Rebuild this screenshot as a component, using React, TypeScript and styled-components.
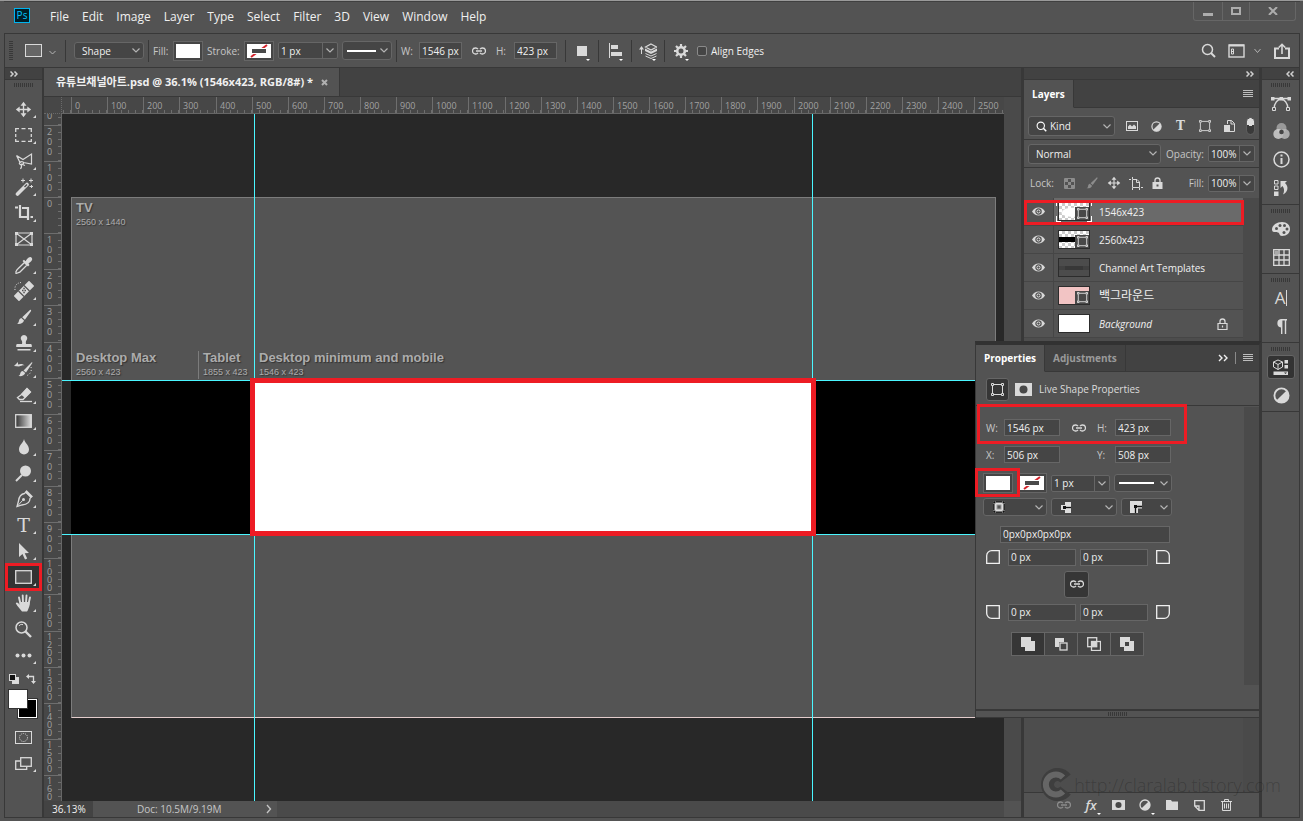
import React from "react";
import styled, { createGlobalStyle, css } from "styled-components";

const c = {
  panel: "#535353",
  strip: "#424242",
  line: "#383838",
  field: "#454545",
  edge: "#666666",
  trough: "#4a4a4a",
  canvas: "#282828",
  text: "#f0f0f0",
  label: "#c6c6c6",
  icon: "#d9d9d9",
  guide: "#4af6ff",
  mark: "#ed1c24",
};

const GlobalStyle = createGlobalStyle`
  * { box-sizing: border-box; }
  body {
    margin: 0;
    background: ${c.panel};
    color: ${c.text};
    font-family: "Open Sans", "Noto Sans CJK KR", sans-serif;
    font-size: 10px;
    line-height: 14px;
  }
  button, input, select { font: inherit; color: inherit; margin: 0; }
  svg { display: block; flex: none; }
`;

/* ---------- shared parts ---------- */

const Shell = styled.div`
  display: flex;
  flex-direction: column;
  height: 100vh;
  overflow: hidden;
  padding: 0 3px 3px 4px;
  background: ${c.panel};
  border-top: 1px solid #9a9a9a;
`;

const Frame = styled.div`
  flex: 1;
  min-height: 0;
  display: flex;
  flex-direction: column;
  border: 1px solid ${c.line};
`;

const Body = styled.div`
  position: relative;
  flex: 1;
  min-height: 0;
  display: flex;
`;

const Svg = ({ w = 16, h = w, box, children }: { w?: number; h?: number; box?: string; children: React.ReactNode }) => (
  <svg width={w} height={h} viewBox={box ?? `0 0 ${w} ${h}`} fill="none" stroke="currentColor" aria-hidden="true">
    {children}
  </svg>
);

const IconButton = styled.button<{ $w?: number; $h?: number; $dim?: boolean }>`
  position: relative;
  display: flex;
  align-items: center;
  justify-content: center;
  flex: none;
  width: ${(p) => p.$w ?? 16}px;
  height: ${(p) => p.$h ?? 20}px;
  padding: 0;
  border: 0;
  background: none;
  color: ${(p) => (p.$dim ? "#8c8c8c" : c.icon)};
`;

const Grip = styled.div<{ $vertical?: boolean }>`
  flex: none;
  ${(p) =>
    p.$vertical
      ? css`width: 4px; height: 20px; background: repeating-linear-gradient(${c.line} 0 1px, transparent 1px 2px);`
      : css`width: 20px; height: 4px; background: repeating-linear-gradient(90deg, ${c.line} 0 1px, transparent 1px 2px);`}
`;

const FieldLabel = styled.label<{ $w?: number }>`
  flex: none;
  width: ${(p) => (p.$w ? `${p.$w}px` : "auto")};
  color: ${c.label};
  white-space: nowrap;
`;

const TextField = styled.input<{ $w: number }>`
  flex: none;
  width: ${(p) => p.$w}px;
  height: 17px;
  padding: 0 2px;
  border: 1px solid ${c.edge};
  background: ${c.field};
  color: ${c.text};
`;

const ComboShell = styled.div<{ $w: number }>`
  flex: none;
  display: flex;
  width: ${(p) => p.$w}px;
  height: 17px;
  border: 1px solid ${c.edge};
  border-radius: 2px;
  background: ${c.field};
  input {
    flex: 1;
    min-width: 0;
    padding: 0 2px;
    border: 0;
    background: none;
  }
  button {
    width: 15px;
    padding: 0;
    border: 0;
    border-left: 1px solid ${c.edge};
    background: none;
    display: flex;
    align-items: center;
    justify-content: center;
    color: #b4b4b4;
  }
`;

const SelectShell = styled.div<{ $w: number; $h: number }>`
  position: relative;
  flex: none;
  display: flex;
  align-items: center;
  width: ${(p) => p.$w}px;
  height: ${(p) => p.$h}px;
  border: 1px solid ${c.edge};
  border-radius: 3px;
  background: ${c.field};
  color: #b4b4b4;
  > svg, > span { pointer-events: none; position: absolute; }
  > svg:last-child { right: 3px; }
`;

const NativeSelect = styled.select<{ $pad: number; $hide?: boolean }>`
  appearance: none;
  width: 100%;
  height: 100%;
  padding: 0 14px 0 ${(p) => p.$pad}px;
  border: 0;
  background: none;
  color: ${(p) => (p.$hide ? "transparent" : c.text)};
`;

const SelectArt = styled.span<{ $left: number }>`
  left: ${(p) => p.$left}px;
  color: #fff;
`;

const Mark = styled.div<{ $t: number; $l: number; $w: number; $h: number }>`
  position: absolute;
  z-index: 3;
  top: ${(p) => p.$t}px;
  left: ${(p) => p.$l}px;
  width: ${(p) => p.$w}px;
  height: ${(p) => p.$h}px;
  border: 3px solid ${c.mark};
  pointer-events: none;
`;

const Chevron = () => (
  <Svg w={8} h={5}>
    <path d="M.5.5 4 4 7.5.5" strokeWidth="1.2" />
  </Svg>
);

const Combo = ({ id, w, value, label }: { id: string; w: number; value: string; label: string }) => (
  <ComboShell $w={w}>
    <input id={id} defaultValue={value} aria-label={label} />
    <button aria-label={`${label} options`}><Chevron /></button>
  </ComboShell>
);

const Select = ({ w, h, pad = 8, label, value, art, artLeft = 4 }: {
  w: number; h: number; pad?: number; label: string; value: string; art?: React.ReactNode; artLeft?: number;
}) => (
  <SelectShell $w={w} $h={h}>
    <NativeSelect $pad={pad} $hide={!!art && pad === 8} aria-label={label}>
      <option>{value}</option>
    </NativeSelect>
    {art && <SelectArt $left={artLeft}>{art}</SelectArt>}
    <Chevron />
  </SelectShell>
);

/* ---------- icons ---------- */

const f = { fill: "currentColor", stroke: "none" };

const LinkIcon = () => (
  <Svg w={14} h={8}>
    <path d="M6 2.2A2.8 2.8 0 0 0 3.8 1H3.5a3 3 0 0 0 0 6h.3A2.8 2.8 0 0 0 6 5.8M8 2.2A2.8 2.8 0 0 1 10.2 1h.3a3 3 0 0 1 0 6h-.3A2.8 2.8 0 0 1 8 5.800M4 4h6" strokeWidth="1.3" />
  </Svg>
);
const TransformIcon = ({ s = 13 }: { s?: number }) => (
  <Svg w={s} box="0 0 13 13">
    <path d="M3 1.500h7M3 11.500h7M1.500 3v7M11.500 3v7M.5.5h2v2h-2zM10.500.5h2v2h-2zM.5 10.500h2v2h-2zM10.500 10.500h2v2h-2z" />
  </Svg>
);
const HalfIcon = ({ s = 12 }: { s?: number }) => (
  <Svg w={s} box="0 0 12 12">
    <circle cx="6" cy="6" r="5" strokeWidth="1.300" />
    <path d="M9.600 2.400A5 5 0 0 1 2.400 9.600z" {...f} />
  </Svg>
);
const MaskIcon = ({ w = 13, h = 10 }: { w?: number; h?: number }) => (
  <Svg w={w} h={h} box="0 0 17 13">
    <rect width="17" height="13" {...f} />
    <circle cx="8.500" cy="6.500" r="4" fill="#484848" stroke="none" />
  </Svg>
);
const MenuLines = () => (
  <Svg w={10} h={8}><path d="M0 .5h10M0 2.500h10M0 4.500h10M0 6.500h10" stroke="#bdbdbd" /></Svg>
);
const MoveIcon = ({ s = 20 }: { s?: number }) => (
  <Svg w={s} box="0 0 20 20">
    <path d="M10 4v12M4 10h12" strokeWidth="1.600" />
    <path d="M10 1 13.500 5.500h-7zM10 19l3.500-4.500h-7zM1 10l4.500-3.500v7zM19 10l-4.500-3.500v7z" {...f} />
  </Svg>
);
const BrushIcon = ({ s = 20 }: { s?: number }) => (
  <Svg w={s} box="0 0 20 20">
    <path d="M17.500 2c.8.500.4 1.300 0 2l-6.500 9-3-2.600 8-7.700c.500-.5 1-.9 1.500-.7zM7 11.200l3 2.600c-.8 3-4 4.400-8 3.700 2-.7 2-1.500 2.400-3.300.3-1.500 1.200-2.600 2.600-3z" {...f} />
  </Svg>
);
const SearchIcon = ({ s = 15 }: { s?: number }) => (
  <Svg w={s} box="0 0 15 15">
    <circle cx="6.500" cy="6.500" r="5" strokeWidth="1.500" />
    <path d="m10 10 4 4" strokeWidth="2" />
  </Svg>
);
const DoubleArrow = ({ left }: { left?: boolean }) => (
  <Svg w={8} h={6}>
    <path d={left ? "M3.500.5 1 3l2.500 2.500M7.500.5 5 3l2.500 2.500" : "M.5.5 3 3 .5 5.500M4.500.5 7 3 4.500 5.500"} stroke="#d0d0d0" strokeWidth="1.500" />
  </Svg>
);
const LockIcon = ({ open }: { open?: boolean }) => (
  <Svg w={11} h={12}>
    <path d="M3 6V3.500a2.500 2.500 0 0 1 5 0V6" strokeWidth="1.300" />
    {open ? <path d="M1 5.500h9v6H1zM5.500 7.500v2" strokeWidth="1.200" /> : (
      <><rect x=".5" y="5" width="10" height="7" {...f} /><rect x="4.500" y="7.500" width="2" height="2" fill="#535353" stroke="none" /></>
    )}
  </Svg>
);

const Slab = styled.span<{ $size: number; $bold?: boolean }>`
  font: ${(p) => (p.$bold ? "bold" : "normal")} ${(p) => p.$size}px/1 "DejaVu Serif", serif;
`;

/* ---------- title bar ---------- */

const TitleBar = styled.header`
  flex: none;
  display: flex;
  height: 32px;
  padding-left: 10px;
  border-top: 1px solid #404040;
`;

const AppLogo = styled.span`
  width: 16px;
  height: 15px;
  margin: 6px 20px 0 0;
  border: 1px solid #00b4f0;
  background: #001d26;
  color: #00c2ff;
  font-size: 10px;
  line-height: 13px;
  text-align: center;
`;

const MenuList = styled.nav`
  display: flex;
  gap: 13px;
  padding-top: 6px;
  font-size: 12px;
  line-height: 18px;
  a { color: ${c.text}; text-decoration: none; }
`;

const WindowButtons = styled.div`
  display: flex;
  height: 19px;
  margin: 0 4px 0 auto;
  border: 1px solid ${c.edge};
  border-top: 0;
  border-radius: 0 0 3px 3px;
  color: #adadad;
  button { height: 18px; color: inherit; }
  button + button { border-left: 1px solid ${c.edge}; }
`;

const menus = ["File", "Edit", "Image", "Layer", "Type", "Select", "Filter", "3D", "View", "Window", "Help"];

const Title = () => (
  <TitleBar>
    <AppLogo>Ps</AppLogo>
    <MenuList aria-label="Main menu">
      {menus.map((m) => <a href="#menu" key={m}>{m}</a>)}
    </MenuList>
    <WindowButtons>
      <IconButton $w={28} aria-label="Minimize"><Svg w={10} h={12}><path d="M0 9.500h10" strokeWidth="3" /></Svg></IconButton>
      <IconButton $w={27} aria-label="Restore"><Svg w={10} h={8}><rect x="1" y="1" width="8" height="6" strokeWidth="2" /></Svg></IconButton>
      <IconButton $w={46} aria-label="Close"><Svg w={10} h={8}><path d="m1 0 8 8M9 0 1 8" strokeWidth="2" /></Svg></IconButton>
    </WindowButtons>
  </TitleBar>
);

/* ---------- options bar ---------- */

const OptionsBar = styled.div`
  flex: none;
  display: flex;
  align-items: center;
  gap: 4px;
  height: 34px;
  padding-left: 4px;
  border-bottom: 1px solid ${c.line};
`;

const Divider = styled.span<{ $wide?: boolean; $end?: boolean }>`
  width: 1px;
  height: 22px;
  margin: 0 ${(p) => (p.$wide || p.$end ? 4 : 0)}px 0 ${(p) => (p.$wide ? 4 : 0)}px;
  background: ${c.line};
`;

const SwatchButton = styled.button`
  flex: none;
  display: flex;
  align-items: center;
  justify-content: center;
  width: 30px;
  height: 20px;
  padding: 0;
  border: 1px solid ${c.edge};
  background: ${c.field};
`;

const FillArt = () => <Svg w={24} h={14}><rect width="24" height="14" fill="#fff" stroke="none" /></Svg>;
const NoStrokeArt = () => (
  <Svg w={24} h={14}>
    <rect width="24" height="14" fill="#fff" stroke="none" />
    <path d="m4 13 16-12" stroke="#d4232b" strokeWidth="2" />
    <rect x="3" y="4" width="18" height="6" fill="#fff" stroke="none" />
    <rect x="5" y="5" width="14" height="4" fill="#4a4a4a" stroke="none" />
  </Svg>
);

const MiniArrow = styled.i`
  position: absolute;
  right: 0;
  bottom: 0;
  border: 2px solid transparent;
  border-top-color: #fff;
  border-bottom: 0;
`;

const CheckLabel = styled.label`
  display: flex;
  align-items: center;
  gap: 4px;
  margin-left: 4px;
  input {
    appearance: none;
    width: 10px;
    height: 10px;
    border: 1px solid #8a8a8a;
    border-radius: 2px;
    background: ${c.field};
  }
`;

const RightTools = styled.div`
  display: flex;
  align-items: center;
  gap: 10px;
  margin-left: auto;
  padding-right: 7px;
`;

const Options = () => (
  <OptionsBar>
    <Grip $vertical />
    <IconButton $w={44} aria-label="Tool preset">
      <Svg w={34} h={14}>
        <rect x="3.500" y=".5" width="16" height="12" fill="#666" />
        <path d="m27.500 7 3 3 3-3" stroke="#b4b4b4" />
      </Svg>
    </IconButton>
    <Divider $end />
    <Select w={70} h={17} pad={7} label="Tool mode" value="Shape" />
    <Divider />
    <FieldLabel $w={16}>Fill:</FieldLabel>
    <SwatchButton aria-label="Fill colour"><FillArt /></SwatchButton>
    <FieldLabel $w={33} htmlFor="stroke-size">Stroke:</FieldLabel>
    <SwatchButton aria-label="Stroke colour"><NoStrokeArt /></SwatchButton>
    <Combo id="stroke-size" w={60} value="1 px" label="Stroke width" />
    <Select w={50} h={19} label="Stroke type" value="Solid" art={<Svg w={29} h={2}><path d="M0 1h29" strokeWidth="2" /></Svg>} />
    <Divider />
    <FieldLabel $w={14} htmlFor="opt-w">W:</FieldLabel>
    <TextField $w={43} id="opt-w" defaultValue="1546 px" />
    <IconButton $w={26} aria-label="Link width and height"><LinkIcon /></IconButton>
    <FieldLabel $w={14} htmlFor="opt-h">H:</FieldLabel>
    <TextField $w={43} id="opt-h" defaultValue="423 px" />
    <Divider $wide />
    <IconButton aria-label="Path operations">
      <Svg w={10} h={10}><rect width="10" height="10" {...f} /></Svg><MiniArrow />
    </IconButton>
    <Divider $wide />
    <IconButton aria-label="Path alignment">
      <Svg w={13} h={15}><path d="M.5 0v15" /><path d="M2 2h7v4H2zM2 9h11v4H2z" {...f} /></Svg><MiniArrow />
    </IconButton>
    <Divider $wide />
    <IconButton aria-label="Path arrangement">
      <Svg w={18} h={16}>
        <path d="M2.500 11V5.500" />
        <path d="M2.500 3 5 6.500H0z" {...f} />
        <path d="m12 1 5.500 3L12 7 6.500 4z" strokeWidth="1.200" />
        <path d="M6 5.500 12 8.500l6-3v2.500l-6 3-6-3z" {...f} />
        <path d="m6.500 10.500 5.500 2.500 5.500-2.500M6.500 13l5.500 2.500 5.500-2.500" />
      </Svg><MiniArrow />
    </IconButton>
    <Divider $wide />
    <IconButton aria-label="Path options">
      <Svg w={14}>
        <circle cx="7" cy="7" r="3.800" strokeWidth="2.600" />
        <path d="M7 0v3M7 11v3M0 7h3M11 7h3M2 2l2 2M10 10l2 2M12 2l-2 2M4 10l-2 2" strokeWidth="2.200" />
      </Svg><MiniArrow />
    </IconButton>
    <CheckLabel><input type="checkbox" />Align Edges</CheckLabel>
    <RightTools>
      <IconButton aria-label="Search"><SearchIcon /></IconButton>
      <IconButton $w={36} aria-label="Workspace">
        <Svg w={34} h={14}>
          <rect x="2" y="1" width="15" height="12" strokeWidth="1.400" />
          <path d="M2 1.500h15" strokeWidth="2" />
          <path d="M4.500 5h2v5h-2zM4.500 7.500h2" />
          <path d="m27.500 5 3 3.500 3-3.500" stroke="#b4b4b4" />
        </Svg>
      </IconButton>
      <IconButton $w={20} aria-label="Share">
        <Svg w={16}><path d="M5 5.500H1V15h14V5.500h-4" strokeWidth="2" /><path d="M8 11V2M4.800 4.500 8 1.300l3.200 3.200" strokeWidth="1.600" /></Svg>
      </IconButton>
    </RightTools>
  </OptionsBar>
);

/* ---------- toolbar ---------- */

const Toolbar = styled.aside`
  flex: none;
  display: flex;
  flex-direction: column;
  align-items: center;
  width: 39px;
  border-right: 2px solid ${c.line};
`;

const Strip = styled.div<{ $end?: boolean }>`
  flex: none;
  align-self: stretch;
  display: flex;
  align-items: center;
  justify-content: ${(p) => (p.$end ? "flex-end" : "flex-start")};
  height: 12px;
  padding: 0 5px;
  border-bottom: 1px solid ${c.line};
  background: ${c.strip};
`;

const ToolGrip = styled(Grip)`
  margin: 3px 0 9px;
`;

const ToolButton = styled(IconButton)<{ $flyout?: boolean; $active?: boolean }>`
  width: 32px;
  height: 26px;
  background: ${(p) => (p.$active ? "#333" : "none")};
  &::after {
    content: "";
    display: ${(p) => (p.$flyout ? "block" : "none")};
    position: absolute;
    right: 4px;
    bottom: 4px;
    border: 1px solid ${c.icon};
    border-width: 0 0 3px 3px;
    border-left-color: transparent;
  }
`;

const tools: { name: string; flyout?: boolean; active?: boolean; art: React.ReactNode }[] = [
  { name: "Move", flyout: true, art: <MoveIcon s={17} /> },
  { name: "Rectangular marquee", flyout: true, art: <Svg w={17} h={14}><path d="M.7 4V.7H4M6.500.7h4M13 .7h3.300V4M16.300 6v3M16.300 11v2.300H13M10.500 13.300h-4M4 13.300H.7V11M.7 9V6" strokeWidth="1.300" /></Svg> },
  { name: "Polygonal lasso", flyout: true, art: <Svg w={18}><path d="m1.500 3.500 6.500 4 8.500-5.500v10l-8-1.500M1.500 3.500 5 10.500c2-2 5 0 3 1.500s-5-.5-3-1.500M6 12l4 1.500M6 12.500c1 1.500.5 3-.5 4.500" strokeWidth="1.200" /></Svg> },
  { name: "Magic wand", flyout: true, art: <Svg w={18}><path d="M2.500 16 12 6.500" strokeWidth="3.600" strokeLinecap="round" /><path d="m9.500 9 2.500-2.500" stroke="#535353" strokeWidth="1.500" /><path d="M6 2.500h4M8 .5v4M14 2.500h4M16 .5v4M14.500 8.500H18M16.500 7v3" /></Svg> },
  { name: "Crop", flyout: true, art: <Svg w={18}><path d="M0 3.500h3M5 1v12h9M7 4h6v12M15.500 13H18" strokeWidth="2.200" /></Svg> },
  { name: "Frame", art: <Svg w={18} h={14}><path d="M1 1h16v12H1zM1 1l16 12M17 1 1 13" strokeWidth="1.200" /><path d="M0 0h3v3H0zM15 0h3v3h-3zM0 11h3v3H0zM15 11h3v3h-3z" {...f} /></Svg> },
  { name: "Eyedropper", flyout: true, art: <Svg w={18}><path d="m9.500 6.500 2.500 2.500-7 7c-1 1-2 .5-2.500 1l-1.500.5v-2c.5-.5.5-1.500 1.500-2.300z" strokeWidth="1.300" /><path d="M7.500 5 9 3.800l1.500 1.400C12 3.500 13 .8 15.500 1c1.500.2 2 2 1.500 3-.5 1.500-2.500 2.500-3.500 3.500l1 1.500-1.500 1.500z" {...f} /></Svg> },
  { name: "Healing brush", flyout: true, art: <Svg w={20}><path d="M5 15 15 5" strokeWidth="7.500" strokeLinecap="square" /><path d="m4.500 10 5.500 5.500M10 4.500l5.500 5.500" stroke="#535353" strokeWidth="1.200" /><path d="M8 9.500h1.500M10.500 9.500H12M9.300 7.500h1.500M9.300 11.500h1.500" stroke="#535353" strokeWidth="1.500" /><path d="M1 9c-.5-4 1.500-7 6-7.500" strokeDasharray="1 1.500" /></Svg> },
  { name: "Brush", flyout: true, art: <BrushIcon s={18} /> },
  { name: "Clone stamp", flyout: true, art: <Svg w={16}><path d="M8 0a3.200 3.200 0 0 1 2.500 5.200C9.700 6.200 9.700 8 10 9h4.500c.8 0 1.300.6 1.300 1.300V12H.2v-1.700C.2 9.600.7 9 1.500 9H6c.3-1 .3-2.800-.5-3.800A3.200 3.200 0 0 1 8 0zM1.500 14h13v1.500h-13z" {...f} /></Svg> },
  { name: "History brush", flyout: true, art: <Svg w={20}><path d="M18 3c.6.500.3 1 0 1.500l-6 9-2.500-2zM8.800 12l2.400 2c-.7 2.500-3.500 3.500-6.700 3 1.800-1 1.500-2.300 2-3.300s1-1.600 2.300-1.700zM0 7l4-4v2.500c3-1 5-.5 7 1C9 6 7 7 5 7.500z" {...f} /><path d="M17 8c1 4-.5 7-4 8.500" strokeDasharray="1 2" /></Svg> },
  { name: "Eraser", flyout: true, art: <Svg w={18} h={16}><path d="m6 8 6-6.500L15.500 5 8 12.500H4.500L2.500 10.500z" strokeWidth="1.300" /><path d="m6 7.500 6-6.500 4 4-6 6z" {...f} /><path d="M5 14.500h12" strokeWidth="1.300" /></Svg> },
  { name: "Gradient", flyout: true, art: <Svg w={17} h={14}><defs><linearGradient id="tool-gradient"><stop stopColor="#333" /><stop offset="1" stopColor="#ddd" /></linearGradient></defs><rect x=".7" y=".7" width="15.600" height="12.600" fill="url(#tool-gradient)" strokeWidth="1.300" /></Svg> },
  { name: "Blur", flyout: true, art: <Svg w={12} h={16}><path d="M6 0c.8 4 5 6 5 10.500a5 5 0 0 1-10 0C1 6 5.200 4 6 0z" {...f} /></Svg> },
  { name: "Dodge", flyout: true, art: <Svg w={17}><circle cx="10.500" cy="6" r="5.500" {...f} /><path d="M7 10 1 16" strokeWidth="2" /></Svg> },
  { name: "Pen", flyout: true, art: <Svg w={18}><path d="m11 2 5 5-1 1.500c0 4-3.500 6-8 6.500L2 16.500 3.500 11C4 7 6 4 9.500 3.500z" strokeWidth="1.300" /><path d="m2.500 16 5-5.500" /><circle cx="8.500" cy="9.500" r="1.500" {...f} /><path d="m11.500 0 6.500 6.500-2 1.500-6-5.500z" {...f} /></Svg> },
  { name: "Type", flyout: true, art: <Slab $size={19}>T</Slab> },
  { name: "Path selection", flyout: true, art: <Svg w={12} h={17}><path d="M1 0v14l3.500-3L7 16.500l2.200-1L6.700 10.300 11 10z" {...f} /></Svg> },
  { name: "Rectangle", flyout: true, active: true, art: <Svg w={17} h={14}><rect x=".7" y=".7" width="15.600" height="12.600" fill="#555" strokeWidth="1.300" /></Svg> },
  { name: "Hand", flyout: true, art: <Svg w={18}><path d="M5.500 10 4 3.500M8 9 7.700 1.500M11 9l.5-7.500M13.500 10l1.500-6.500" strokeWidth="1.900" strokeLinecap="round" /><path d="M4.500 8h10.200c.5 4-1.200 6-2 8.500L12 17.500H7L2.500 12 .8 9.500c.4-1.300 1.700-1 2.500-.2l1.500 1.400z" {...f} /></Svg> },
  { name: "Zoom", art: <Svg w={17}><circle cx="6.500" cy="6.500" r="5.500" strokeWidth="1.500" /><path d="M4 5c.8-1.500 2.500-2 4-1.300" /><path d="m10.500 10.500 5.500 5.500" strokeWidth="2.400" /></Svg> },
  { name: "Edit toolbar", flyout: true, art: <Svg w={17} h={5}><circle cx="2.500" cy="2.500" r="2" {...f} /><circle cx="8.500" cy="2.500" r="2" {...f} /><circle cx="14.500" cy="2.500" r="2" {...f} /></Svg> },
];

const MiniRow = styled.div`
  align-self: stretch;
  display: flex;
  justify-content: space-between;
  padding: 4px 6px 0 4px;
`;

const ColourPair = styled.div`
  display: grid;
  grid-template: 10px 10px 9px / 10px 10px 9px;
  margin: 3px 2px 6px 0;
`;

const ColourWell = styled.button<{ $back?: boolean }>`
  padding: 0;
  grid-area: ${(p) => (p.$back ? "2 / 2 / 4 / 4" : "1 / 1 / 3 / 3")};
  border: 1px solid ${(p) => (p.$back ? "#fff" : "#333")};
  outline: ${(p) => (p.$back ? 1 : 0)}px solid #333;
  background: ${(p) => (p.$back ? "#000" : "#fff")};
  z-index: ${(p) => (p.$back ? 0 : 1)};
`;

const ToolPanel = () => (
  <Toolbar aria-label="Tools">
    <Strip><DoubleArrow /></Strip>
    <ToolGrip />
    {tools.map((t) => (
      <ToolButton key={t.name} aria-label={t.name} $flyout={t.flyout} $active={t.active}>
        {t.art}
        {t.active && <Mark $t={-1} $l={-3} $w={37} $h={28} />}
      </ToolButton>
    ))}
    <MiniRow>
      <IconButton $w={10} $h={14} aria-label="Default colours">
        <Svg w={10}><rect x="3.500" y="3.500" width="6" height="6" fill="#ddd" /><rect x=".5" y=".5" width="6" height="6" fill="#111" /></Svg>
      </IconButton>
      <IconButton $w={10} $h={14} aria-label="Swap colours">
        <Svg w={10}><path d="M2 2.500h5.500V8" strokeWidth="1.300" /><path d="M3 0v5L0 2.500zM5 7h5l-2.500 3z" {...f} /></Svg>
      </IconButton>
    </MiniRow>
    <ColourPair>
      <ColourWell aria-label="Foreground colour" />
      <ColourWell $back aria-label="Background colour" />
    </ColourPair>
    <ToolButton aria-label="Quick mask">
      <Svg w={17} h={13}><rect x=".5" y=".5" width="16" height="12" /><circle cx="8.500" cy="6.500" r="4" strokeDasharray="1 1" /></Svg>
    </ToolButton>
    <ToolButton aria-label="Screen mode" $flyout>
      <Svg w={17} h={13}><path d="M5 4H.7v8.300h11V10" strokeWidth="1.300" /><rect x="5.700" y=".7" width="10.600" height="8.600" strokeWidth="1.300" /></Svg>
    </ToolButton>
  </Toolbar>
);

/* ---------- document ---------- */

const Document = styled.main`
  flex: 1;
  min-width: 0;
  display: flex;
  flex-direction: column;
`;

const TabBar = styled.div`
  flex: none;
  display: flex;
  height: 29px;
  border-bottom: 1px solid ${c.line};
  background: ${c.strip};
`;

const DocTab = styled.div`
  display: flex;
  align-items: center;
  gap: 8px;
  padding: 0 10px 0 12px;
  border-right: 1px solid ${c.line};
  background: ${c.panel};
  font-weight: 700;
  font-size: 11px;
  white-space: nowrap;
`;

const Workspace = styled.div`
  flex: 1;
  min-height: 0;
  display: grid;
  grid-template: 17px minmax(0, 1fr) / 18px minmax(0, 1fr) 17px;
`;

const RulerCorner = styled.div`
  border-right: 1px dotted #6a6a6a;
  border-bottom: 1px dotted #6a6a6a;
  background: #474747;
`;

const Ruler = styled.div<{ $vertical?: boolean }>`
  display: flex;
  flex-direction: ${(p) => (p.$vertical ? "column" : "row")};
  overflow: hidden;
  background: #474747;
  color: #a2a2a2;
  font-size: 9px;
  border: 0 solid #666;
  border-width: ${(p) => (p.$vertical ? "0 1px 0 0" : "0 0 1px 0")};
`;

const RulerCell = styled.span<{ $vertical?: boolean; $long?: boolean }>`
  flex: none;
  ${(p) =>
    p.$vertical
      ? css`
          padding: 1px 0 0 3px;
          border-top: 1px solid #6e6e6e;
          overflow: hidden;
          line-height: ${p.$long ? 8 : 10}px;
          background: repeating-linear-gradient(#6e6e6e 0 1px, transparent 1px 7px) right 6px / 3px 100% no-repeat;
        `
      : css`
          padding-left: 3px;
          border-left: 1px solid #6e6e6e;
          line-height: 17px;
          background: repeating-linear-gradient(90deg, #6e6e6e 0 1px, transparent 1px 7px) 6px bottom / 100% 3px no-repeat;
        `}
`;

const Digit = styled.span`
  display: block;
`;

const Gutter = styled.div`
  grid-row: 1 / 3;
  grid-column: 3;
  background: ${c.trough};
`;

const Canvas = styled.div`
  position: relative;
  overflow: hidden;
  background: ${c.canvas};
`;

const Artboard = styled.div`
  position: absolute;
  top: 83px;
  left: 9px;
  width: 925px;
  height: 521px;
  border: 1px solid #7c7c7c;
  border-bottom-color: #e3cccc;
  background: #545454;
`;

const Band = styled.div`
  position: absolute;
  top: 183px;
  left: -1px;
  right: 0;
  height: 153px;
  background: #000;
`;

const Shape = styled.div`
  position: absolute;
  top: 264px;
  left: 188px;
  width: 566px;
  height: 158px;
  border: 5px solid ${c.mark};
  background: #fff;
  z-index: 2;
`;

const Guide = styled.div<{ $x?: number; $y?: number }>`
  position: absolute;
  z-index: 1;
  background: ${c.guide};
  ${(p) =>
    p.$x !== undefined
      ? css`left: ${p.$x}px; top: 0; bottom: 0; width: 1px;`
      : css`top: ${p.$y}px; left: 0; right: 0; height: 1px;`}
`;

const Region = styled.div<{ $x: number; $y: number; $rule?: boolean }>`
  position: absolute;
  left: ${(p) => p.$x}px;
  top: ${(p) => p.$y}px;
  padding-left: 4px;
  border-left: 1px solid ${(p) => (p.$rule ? "#7c7c7c" : "transparent")};
  color: #acacac;
  font-family: "Liberation Sans", sans-serif;
  font-size: 9px;
  line-height: 14px;
  white-space: nowrap;
  text-shadow: 1px 1px 1px #333;
  strong { display: block; font-size: 13px; }
`;

const StatusBar = styled.div`
  flex: none;
  display: flex;
  height: 16px;
  margin-right: 17px;
  background: #4a4a4a;
  line-height: 16px;
`;

const ZoomReadout = styled.span`
  width: 49px;
  padding-left: 8px;
  background: #434343;
`;

const DocInfo = styled.button`
  display: flex;
  align-items: center;
  justify-content: space-between;
  width: 184px;
  padding: 0 5px 0 44px;
  border: 0;
  background: ${c.panel};
  color: ${c.label};
`;

const SCALE = 0.3613;
const edge = (i: number) => Math.round(i * 100 * SCALE);
const range = (a: number, b: number) => Array.from({ length: b - a }, (_, i) => a + i);

const Doc = () => (
  <Document>
    <TabBar>
      <DocTab>
        유튜브채널아트.psd @ 36.1% (1546x423, RGB/8#) *
        <IconButton $w={8} $h={12} $dim aria-label="Close document"><Svg w={7}><path d="m1 1 5 5M6 1 1 6" strokeWidth="2" stroke="#b0b0b0" /></Svg></IconButton>
      </DocTab>
    </TabBar>
    <Workspace>
      <RulerCorner />
      <Ruler>
        {range(-1, 26).map((i) => (
          <RulerCell key={i} style={{ width: edge(i + 1) - edge(i), marginLeft: i === -1 ? 9 - edge(1) : 0 }}>{i >= 0 && i * 100}</RulerCell>
        ))}
      </Ruler>
      <Gutter />
      <Ruler $vertical>
        {range(-3, 17).map((i) => (
          <RulerCell $vertical $long={i > 9} key={i} style={{ height: edge(i + 1) - edge(i), marginTop: i === -3 ? 83 + edge(-3) : 0 }}>
            {String(Math.abs(i * 100)).split("").map((d, k) => <Digit key={k}>{d}</Digit>)}
          </RulerCell>
        ))}
      </Ruler>
      <Canvas>
        <Artboard>
          <Band />
          <Region $x={-1} $y={3}><strong>TV</strong>2560 x 1440</Region>
          <Region $x={-1} $y={153}><strong>Desktop Max</strong>2560 x 423</Region>
          <Region $x={126} $y={153} $rule><strong>Tablet</strong>1855 x 423</Region>
          <Region $x={182} $y={153}><strong>Desktop minimum and mobile</strong>1546 x 423</Region>
        </Artboard>
        <Guide $x={192} />
        <Guide $x={750} />
        <Guide $y={266} />
        <Guide $y={420} />
        <Shape />
      </Canvas>
    </Workspace>
    <StatusBar>
      <ZoomReadout>36.13%</ZoomReadout>
      <DocInfo>Doc: 10.5M/9.19M<Svg w={6} h={10}><path d="m1 1 3.500 4L1 9" strokeWidth="1.300" /></Svg></DocInfo>
    </StatusBar>
  </Document>
);

/* ---------- layers panel ---------- */

const LayersPanel = styled.section`
  flex: none;
  display: flex;
  flex-direction: column;
  width: 241px;
  border: 0 solid ${c.line};
  border-width: 0 3px;
`;

const Tabs = styled.div<{ $h: number }>`
  flex: none;
  display: flex;
  align-items: stretch;
  height: ${(p) => p.$h}px;
  background: ${c.strip};
`;

const Tab = styled.button<{ $active?: boolean }>`
  padding: 0 8px;
  border: 0;
  border-right: 1px solid ${c.line};
  border-bottom: 1px solid ${(p) => (p.$active ? c.panel : c.line)};
  background: ${(p) => (p.$active ? c.panel : c.strip)};
  color: ${(p) => (p.$active ? "#fff" : "#9a9a9a")};
  font-weight: 700;
`;

const TabFill = styled.div`
  flex: 1;
  display: flex;
  align-items: center;
  justify-content: flex-end;
  gap: 7px;
  padding-right: 6px;
  border-bottom: 1px solid ${c.line};
  i { width: 1px; height: 12px; background: #8a8a8a; }
`;

const PanelRow = styled.div<{ $h: number; $top?: number; $last?: boolean }>`
  flex: none;
  display: flex;
  align-items: center;
  height: ${(p) => p.$h}px;
  padding: ${(p) => p.$top ?? 0}px 4px 0;
  border-bottom: ${(p) => (p.$last ? 0 : 1)}px solid ${c.line};
  > label { margin-left: auto; margin-right: 4px; }
`;

const RowCaption = styled.span`
  margin: 0 5px 0 2px;
  color: ${c.label};
`;

const FilterToggle = styled.input`
  appearance: none;
  width: 9px;
  height: 18px;
  margin: 0 0 0 auto;
  border: 1px solid #5e5e5e;
  border-radius: 5px;
  background: radial-gradient(circle at 50% 4px, #ddd 0 4px, #3a3a3a 4px);
`;

const LayerArea = styled.div`
  flex: 1;
  display: flex;
  background: #4d4d4d;
`;

const LayerList = styled.ul`
  flex: 1;
  margin: 0;
  padding: 0;
  list-style: none;
`;

const LayerTrough = styled.div`
  width: 16px;
  background: #4a4a4a;
`;

const LayerRow = styled.li<{ $selected?: boolean; $italic?: boolean }>`
  position: relative;
  display: flex;
  align-items: center;
  height: 28px;
  border-bottom: 1px solid #464646;
  background: ${(p) => (p.$selected ? "#6a6a6a" : c.panel)};
  font-style: ${(p) => (p.$italic ? "italic" : "normal")};
`;

const EyeButton = styled(IconButton)`
  background: ${c.panel};
  border-right: 1px solid #464646;
`;

const Thumb = styled.span<{ $kind: string }>`
  display: flex;
  align-items: flex-end;
  justify-content: flex-end;
  width: 32px;
  height: 19px;
  margin: 0 9px 0 4px;
  border: 1px solid #2c2c2c;
  background: ${(p) =>
    ({
      selected: "radial-gradient(ellipse 12px 5px at 45% 55%, #fff 80%, transparent), repeating-conic-gradient(#ccc 0 25%, #fff 0 50%) 0 0 / 6px 6px",
      band: "linear-gradient(transparent 6px, #000 6px 11px, transparent 11px), repeating-conic-gradient(#ccc 0 25%, #fff 0 50%) 0 0 / 6px 6px",
      template: "linear-gradient(#383838, #383838) center / 18px 4px no-repeat, linear-gradient(transparent 7px, #414141 7px 11px, transparent 11px), #4c4c4c",
      pink: "#f2c4c4",
      white: "#fff",
    })[p.$kind]};
`;

const CornerTicks = styled.i`
  position: absolute;
  top: 2px;
  left: 32px;
  width: 36px;
  height: 22px;
  border: 1px solid #fff;
  clip-path: polygon(0 0, 5px 0, 5px 100%, 0 100%, 0 16px, 100% 16px, 100% 100%, 31px 100%, 31px 0, 100% 0, 100% 6px, 0 6px);
`;

const ShapeBadge = styled.span`
  display: grid;
  place-items: center;
  width: 14px;
  height: 13px;
  background: #484848;
  color: #eee;
`;

const LayerName = styled.span<{ $korean?: boolean }>`
  flex: 1;
  font-size: ${(p) => (p.$korean ? 12 : 10)}px;
`;

const LayerFooter = styled.div`
  flex: none;
  display: flex;
  align-items: center;
  gap: 7px;
  height: 25px;
  padding-left: 30px;
  border-top: 1px solid ${c.line};
`;

const Fx = styled.em`
  font: italic 600 13px/1 "Open Sans", sans-serif;
`;

const layers = [
  { name: "1546x423", kind: "selected", shape: true },
  { name: "2560x423", kind: "band", shape: true },
  { name: "Channel Art Templates", kind: "template" },
  { name: "백그라운드", kind: "pink", shape: true, korean: true },
  { name: "Background", kind: "white", locked: true },
];

const EyeIcon = () => (
  <Svg w={13} h={9}>
    <path d="M0 4.500C3-.9 10-.9 13 4.500 10 9.900 3 9.900 0 4.500z" {...f} />
    <circle cx="6.500" cy="4.500" r="2.600" fill="#eee" stroke="#535353" strokeWidth="1.300" />
    <circle cx="6.500" cy="4.500" r="1.200" fill="#535353" stroke="none" />
  </Svg>
);

const Layers = () => (
  <LayersPanel aria-label="Layers">
    <Strip $end><DoubleArrow /></Strip>
    <Tabs $h={28}><Tab $active>Layers</Tab><TabFill><MenuLines /></TabFill></Tabs>
    <PanelRow $h={32} $top={5}>
      <Select w={87} h={20} pad={21} label="Filter type" value="Kind" art={<SearchIcon s={11} />} artLeft={7} />
      <IconButton $w={33} aria-label="Filter pixel layers"><Svg w={12} h={10}><rect x=".5" y=".5" width="11" height="9" /><path d="M2 8V5.500L4 3.500l2 2 2-2 2 2V8z" {...f} /></Svg></IconButton>
      <IconButton $w={16} aria-label="Filter adjustment layers"><HalfIcon s={11} /></IconButton>
      <IconButton $w={33} aria-label="Filter type layers"><Slab $size={12} $bold>T</Slab></IconButton>
      <IconButton $w={16} aria-label="Filter shape layers"><TransformIcon s={12} /></IconButton>
      <IconButton $w={33} aria-label="Filter smart objects"><Svg w={11} h={12}><path d="M3.500 4V.5h4l3 3v8h-5M7 .5V4h3.500" /><rect y="5" width="6" height="7" {...f} /></Svg></IconButton>
      <FilterToggle type="checkbox" aria-label="Layer filtering" />
    </PanelRow>
    <PanelRow $h={28}>
      <Select w={133} h={20} pad={7} label="Blend mode" value="Normal" />
      <FieldLabel htmlFor="opacity">Opacity:</FieldLabel>
      <Combo id="opacity" w={47} value="100%" label="Opacity" />
    </PanelRow>
    <PanelRow $h={30} $last>
      <RowCaption>Lock:</RowCaption>
      <IconButton $w={22} $dim aria-label="Lock transparent pixels"><Svg w={11}><path d="M.5.5h10v10H.5z" /><path d="M1 1h3v3H1zM7 1h3v3H7zM4 4h3v3H4zM1 7h3v3H1zM7 7h3v3H7z" {...f} /></Svg></IconButton>
      <IconButton $w={22} $dim aria-label="Lock image pixels"><BrushIcon s={14} /></IconButton>
      <IconButton $w={22} aria-label="Lock position"><MoveIcon s={14} /></IconButton>
      <IconButton $w={22} aria-label="Lock artboard nesting"><Svg w={14} h={13}><path d="M3.500 0v2M3.500 11v2M0 2.500h2M10.500 11v2M12 10.500h2M3.500 10.500v-8h4.500l2.500 2.500v5.500zM7.500 2.500v3h3" /></Svg></IconButton>
      <IconButton $w={22} aria-label="Lock all"><LockIcon /></IconButton>
      <FieldLabel htmlFor="fill-opacity">Fill:</FieldLabel>
      <Combo id="fill-opacity" w={47} value="100%" label="Fill opacity" />
    </PanelRow>
    <LayerArea>
      <LayerList>
        {layers.map((l) => (
          <LayerRow key={l.name} $selected={l.kind === "selected"} $italic={l.locked}>
            <EyeButton $w={30} $h={27} aria-label={`Toggle ${l.name}`}><EyeIcon /></EyeButton>
            <Thumb $kind={l.kind}>{l.shape && <ShapeBadge><TransformIcon s={11} /></ShapeBadge>}</Thumb>
            <LayerName $korean={l.korean}>{l.name}</LayerName>
            {l.locked && <IconButton $w={42} aria-label="Locked layer"><LockIcon open /></IconButton>}
            {l.kind === "selected" && <><CornerTicks /><Mark $t={2} $l={0} $w={220} $h={25} /></>}
          </LayerRow>
        ))}
      </LayerList>
      <LayerTrough />
    </LayerArea>
    <LayerFooter>
      <IconButton $w={20} $dim aria-label="Link layers"><LinkIcon /></IconButton>
      <IconButton $w={20} aria-label="Layer style"><Fx>fx</Fx><MiniArrow /></IconButton>
      <IconButton $w={20} aria-label="Add mask"><MaskIcon /></IconButton>
      <IconButton $w={20} aria-label="New adjustment layer"><HalfIcon /><MiniArrow /></IconButton>
      <IconButton $w={20} aria-label="New group"><Svg w={12} h={10}><path d="M0 0h5l1 1.500h6V10H0z" {...f} /></Svg></IconButton>
      <IconButton $w={20} aria-label="New layer"><Svg w={11}><path d="M2 .7h8.300v9.600H5L.7 6V.7H2M.7 6H5v4.300" strokeWidth="1.300" /></Svg></IconButton>
      <IconButton $w={20} aria-label="Delete layer"><Svg w={11} h={12}><path d="M0 2.500h11M3.500 2.500v-2h4v2M1.500 2.500v9h8v-9M3.500 4.500v5M5.500 4.500v5M7.500 4.500v5" /></Svg></IconButton>
    </LayerFooter>
  </LayersPanel>
);

/* ---------- collapsed icon dock ---------- */

const Dock = styled.aside`
  flex: none;
  display: flex;
  flex-direction: column;
  width: 37px;
`;

const DockGroup = styled.div<{ $first?: boolean }>`
  display: flex;
  flex-direction: column;
  align-items: center;
  padding: ${(p) => (p.$first ? "3px 0 3px 1px" : "4px 0 2px 1px")};
  border-bottom: 1px solid ${c.line};
`;

const DockButton = styled(IconButton)<{ $active?: boolean }>`
  width: 28px;
  height: ${(p) => (p.$active ? 24 : 28)}px;
  margin: ${(p) => (p.$active ? 2 : 0)}px 0;
  background: ${(p) => (p.$active ? "#333" : "none")};
  border: 1px solid ${(p) => (p.$active ? c.edge : "transparent")};
  border-radius: 3px;
`;

const DockGrip = styled(Grip)`
  margin-bottom: 2px;
`;

const CharacterGlyph = styled.span`
  padding-right: 1px;
  border-right: 1px solid ${c.icon};
  font: 17px/16px "Open Sans", sans-serif;
`;

const IconDock = () => (
  <Dock aria-label="Collapsed panels">
    <Strip $end><DoubleArrow left /></Strip>
    <DockGroup $first>
      <DockGrip />
      <DockButton aria-label="Paths"><Svg w={22} h={15}><path d="M3 2.500h16M4 13C4 7 8 3 11 3s7 4 7 10" strokeWidth="1.300" /><path d="M1 1h3.500v3.500H1zM9.500 1H13v3.500H9.500zM17.500 1H21v3.500h-3.500z" {...f} /><path d="M2.500 11.500h3v3h-3zM16.500 11.500h3v3h-3z" fill="#535353" /></Svg></DockButton>
      <DockButton aria-label="Channels"><Svg w={17}><circle cx="8.500" cy="5" r="5" fill="#999" stroke="none" /><circle cx="5.300" cy="11" r="5" fill="#d0d0d0" stroke="none" fillOpacity=".85" /><circle cx="11.700" cy="11" r="5" fill="#b8b8b8" stroke="none" fillOpacity=".85" /><circle cx="8.500" cy="9" r="2.300" fill="#444" stroke="none" /></Svg></DockButton>
      <DockButton aria-label="Info"><Svg w={17}><circle cx="8.500" cy="8.500" r="7.500" strokeWidth="1.500" /><path d="M8.500 3.500v2M8.500 7v6" strokeWidth="2" /></Svg></DockButton>
      <DockButton aria-label="History"><Svg w={16} h={17}><path d="M1.500 1.500H5V5H1.500zM1.500 7H5v3.500H1.500z" /><path d="M1 12.500h4.500V17H1zM7.500 2H14l-2 2c4 3.500 3 9-2 11.500 1.500-3 1.500-6-.5-8.500l-2 2z" {...f} /></Svg></DockButton>
    </DockGroup>
    <DockGroup>
      <DockGrip />
      <DockButton aria-label="Color"><Svg w={18} h={14}><path d="M10 0c5 0 8 3 8 7s-3 7-8 7c-3 0-2-3-4-3.500S0 11 0 7.500C0 3 5 0 10 0z" {...f} /><g fill="#535353" stroke="none"><circle cx="4.500" cy="6.500" r="1.500" /><circle cx="8" cy="3.500" r="1.500" /><circle cx="12.500" cy="3.500" r="1.500" /><circle cx="15" cy="7" r="1.500" /><circle cx="12" cy="10.500" r="1.500" /></g></Svg></DockButton>
      <DockButton aria-label="Swatches"><Svg w={17}><path d="M.7.7h15.600v15.600H.7zM6 .7v15.600M11 .7v15.600M.7 6h15.600M.7 11h15.600" strokeWidth="1.300" /><rect x="1.500" y="1.500" width="4" height="4" fill="#aaa" stroke="none" /></Svg></DockButton>
    </DockGroup>
    <DockGroup>
      <DockGrip />
      <DockButton aria-label="Character"><CharacterGlyph>A</CharacterGlyph></DockButton>
      <DockButton aria-label="Paragraph"><Svg w={12} h={15}><path d="M6 0h6v1.500H6v7A4.300 4.300 0 0 1 6 0z" {...f} /><path d="M6.700 0v15M10.500 0v15" strokeWidth="1.400" /></Svg></DockButton>
    </DockGroup>
    <DockGroup>
      <DockGrip />
      <DockButton $active aria-label="Properties"><Svg w={16} h={17}><path d="m5 1 4.500 2v5L5 10.500.5 8V3zM.5 3 5 5.500 9.500 3M5 5.500v5" /><path d="M11.500 1H15v3.500h-3.500zM11.500 6H15v3.500h-3.500zM.5 12.500H15V16H.5z" {...f} /><path d="M11 13.500h3l-1.500 1.500z" fill="#333" stroke="none" /></Svg></DockButton>
      <DockButton aria-label="Adjustments"><HalfIcon s={17} /></DockButton>
    </DockGroup>
  </Dock>
);

/* ---------- floating properties panel ---------- */

const Floating = styled.section`
  position: absolute;
  z-index: 5;
  top: 273px;
  right: 38px;
  width: 286px;
  border: 1px solid ${c.line};
  border-top: 4px solid #323232;
  border-right-width: 2px;
  background: ${c.panel};
`;

const PropHeader = styled.div`
  display: flex;
  align-items: center;
  gap: 6px;
  height: 34px;
  padding: 1px 10px 0;
  border-bottom: 1px solid ${c.line};
  color: #dcdcdc;
  h2 { margin: 0 0 0 1px; font: inherit; }
`;

const PressedButton = styled(IconButton)`
  border: 1px solid ${c.edge};
  border-radius: 3px;
  background: #363636;
`;

const PropBody = styled.div`
  display: flex;
  justify-content: space-between;
  height: 303px;
`;

const PropFields = styled.div`
  width: 197px;
  padding: 8px 0 0 7px;
`;

const PropScroll = styled.div`
  width: 15px;
  height: 278px;
  margin-top: 1px;
  background: ${c.trough};
`;

const PropRow = styled.div<{ $h: number; $indent?: number; $top?: number }>`
  position: relative;
  display: flex;
  align-items: center;
  gap: 4px;
  height: ${(p) => p.$h}px;
  margin-top: ${(p) => p.$top ?? 0}px;
  padding-left: ${(p) => p.$indent ?? 0}px;
`;

const LinkGap = styled.span`
  width: 29px;
`;

const SegmentGroup = styled.div`
  display: flex;
  border: 1px solid ${c.edge};
  button { background: ${c.field}; }
  button:first-child { background: #363636; }
  button + button { border-left: 1px solid ${c.edge}; }
`;

const PropFooter = styled.div`
  display: flex;
  justify-content: center;
  height: 8px;
  padding-top: 1px;
  border-top: 2px solid ${c.line};
`;

const Corner = ({ turn }: { turn: number }) => (
  <Svg w={14}><path d="M.7 13.300V5.700a5 5 0 0 1 5-5h7.600v12.600z" strokeWidth="1.300" transform={`rotate(${turn} 7 7)`} /></Svg>
);

const Properties = () => (
  <Floating aria-label="Properties">
    <Tabs $h={27}>
      <Tab $active>Properties</Tab>
      <Tab>Adjustments</Tab>
      <TabFill><Svg w={10} h={8}><path d="m1 1 3 3-3 3M6 1l3 3-3 3" strokeWidth="1.400" /></Svg><i /><MenuLines /></TabFill>
    </Tabs>
    <PropHeader>
      <PressedButton $w={23} $h={23} aria-label="Shape properties"><TransformIcon /></PressedButton>
      <IconButton $w={17} aria-label="Mask properties"><MaskIcon w={17} h={13} /></IconButton>
      <h2>Live Shape Properties</h2>
    </PropHeader>
    <PropBody>
      <PropFields>
        <PropRow $h={27} $indent={3}>
          <FieldLabel $w={14} htmlFor="prop-w">W:</FieldLabel>
          <TextField $w={56} id="prop-w" defaultValue="1546 px" />
          <IconButton $w={29} aria-label="Link width and height"><LinkIcon /></IconButton>
          <FieldLabel $w={14} htmlFor="prop-h">H:</FieldLabel>
          <TextField $w={56} id="prop-h" defaultValue="423 px" />
          <Mark $t={-10} $l={-6} $w={210} $h={40} />
        </PropRow>
        <PropRow $h={27} $indent={3}>
          <FieldLabel $w={14} htmlFor="prop-x">X:</FieldLabel>
          <TextField $w={56} id="prop-x" defaultValue="506 px" />
          <LinkGap />
          <FieldLabel $w={14} htmlFor="prop-y">Y:</FieldLabel>
          <TextField $w={56} id="prop-y" defaultValue="508 px" />
        </PropRow>
        <PropRow $h={30}>
          <SwatchButton aria-label="Shape fill"><FillArt /></SwatchButton>
          <SwatchButton aria-label="Shape stroke"><NoStrokeArt /></SwatchButton>
          <Combo id="prop-stroke" w={59} value="1 px" label="Shape stroke width" />
          <Select w={58} h={18} label="Shape stroke type" value="Solid" art={<Svg w={35} h={2}><path d="M0 1h35" strokeWidth="2" /></Svg>} />
          <Mark $t={0} $l={-8} $w={45} $h={29} />
        </PropRow>
        <PropRow $h={18}>
          <Select w={64} h={18} label="Stroke alignment" value="Inside" artLeft={9} art={<Svg w={12}><rect x="1" y="1" width="10" height="10" fill="#ddd" stroke="#111" /><rect x="4" y="4" width="4" height="4" fill="#555" stroke="#999" /><path d="M0 0h2.500v2.500H0zM9.500 0H12v2.500H9.500zM0 9.500h2.500V12H0zM9.500 9.500H12V12H9.500z" fill="#111" stroke="#ccc" strokeWidth=".4" /></Svg>} />
          <Select w={66} h={18} label="Line cap" value="Butt" artLeft={9} art={<Svg w={11}><path d="M4 0h6v11H4V8H0V3h4z" fill="#ddd" stroke="none" /><path d="M3 5.500h7" stroke="#111" strokeWidth="1.300" /><path d="M2 4h3v3H2z" fill="#111" stroke="none" /></Svg>} />
          <Select w={51} h={18} label="Line join" value="Miter" artLeft={8} art={<Svg w={12}><path d="M0 0h12v7.500H8V12H0z" fill="#ddd" stroke="none" /><path d="M5.500 12V5.500H12" stroke="#111" strokeWidth="1.300" /><path d="M4 4h3v3H4z" fill="#111" stroke="none" /></Svg>} />
        </PropRow>
        <PropRow $h={24} $top={6} $indent={17}>
          <TextField $w={170} defaultValue="0px0px0px0px" aria-label="Corner radii" />
        </PropRow>
        <PropRow $h={22} $indent={3}>
          <Corner turn={0} /><span />
          <TextField $w={68} defaultValue="0 px" aria-label="Top left radius" />
          <TextField $w={68} defaultValue="0 px" aria-label="Top right radius" />
          <span /><Corner turn={90} />
        </PropRow>
        <PropRow $h={32} $indent={81}>
          <PressedButton $w={25} $h={27} aria-label="Link corner radii"><LinkIcon /></PressedButton>
        </PropRow>
        <PropRow $h={24} $indent={3}>
          <Corner turn={270} /><span />
          <TextField $w={68} defaultValue="0 px" aria-label="Bottom left radius" />
          <TextField $w={68} defaultValue="0 px" aria-label="Bottom right radius" />
          <span /><Corner turn={180} />
        </PropRow>
        <PropRow $h={40} $indent={28}>
          <SegmentGroup>
            <IconButton $w={32} $h={22} aria-label="Combine shapes"><Svg w={14}><path d="M0 0h10v4h4v10H4v-4H0z" {...f} /></Svg></IconButton>
            <IconButton $w={33} $h={22} aria-label="Subtract front shape"><Svg w={13}><path d="M0 0h9v4H4v5H0z" {...f} /><rect x="5" y="5" width="7" height="7" strokeWidth="1.300" /></Svg></IconButton>
            <IconButton $w={33} $h={22} aria-label="Intersect shapes"><Svg w={14}><rect x=".7" y=".7" width="9" height="9" strokeWidth="1.300" /><rect x="4.500" y="4.500" width="9" height="9" strokeWidth="1.300" /><rect x="4.500" y="4.500" width="5" height="5" {...f} /></Svg></IconButton>
            <IconButton $w={33} $h={22} aria-label="Exclude overlapping shapes"><Svg w={14}><path fillRule="evenodd" d="M0 0h10v4h4v10H4v-4H0zM5 5v4h4V5z" {...f} /></Svg></IconButton>
          </SegmentGroup>
        </PropRow>
      </PropFields>
      <PropScroll />
    </PropBody>
    <PropFooter><Grip /></PropFooter>
  </Floating>
);

/* ---------- watermark ---------- */

const Watermark = styled.div`
  position: absolute;
  z-index: 6;
  right: 18px;
  bottom: 16px;
  display: flex;
  align-items: center;
  gap: 2px;
  color: rgba(0, 0, 0, 0.22);
  font-size: 18px;
  font-weight: 300;
  line-height: 32px;
  pointer-events: none;
`;

export default function App() {
  return (
    <>
      <GlobalStyle />
      <Shell>
        <Title />
        <Frame>
          <Options />
          <Body>
            <ToolPanel />
            <Doc />
            <Layers />
            <IconDock />
            <Properties />
            <Watermark>
              <Svg w={33}>
                <path d="M26.500 10.500a10 10 0 1 0 0 12" stroke="#3e3e3e" strokeWidth="13" />
                <path d="M24 9.500a10 10 0 1 0 0 14" stroke="#666" strokeWidth="6" />
              </Svg>
              http://claralab.tistory.com
            </Watermark>
          </Body>
        </Frame>
      </Shell>
    </>
  );
}
